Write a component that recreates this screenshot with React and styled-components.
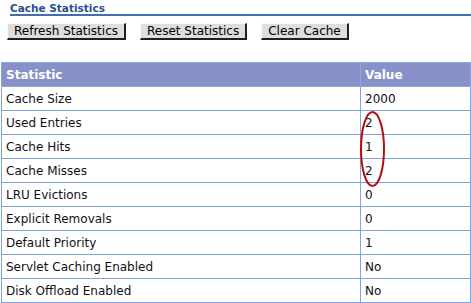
import React from "react";
import styled, { createGlobalStyle } from "styled-components";

const Global = createGlobalStyle`
  html, body { margin: 0; padding: 0; background: #fff; }
  body { font-family: "DejaVu Sans", Verdana, sans-serif; font-size: 12px; color: #000; }
`;

const Page = styled.div`
  width: 471px;
  height: 303px;
  overflow: hidden;
  position: relative;
`;

const TitleBar = styled.div`
  margin-left: 10px;
  padding-top: 2px;
  height: 12px;
  border-bottom: 2px solid #3f6fb0;
`;

const Title = styled.h2`
  margin: 0;
  font-size: 10.5px;
  line-height: 12px;
  font-weight: bold;
  color: #27508f;
`;

const Toolbar = styled.div`
  display: flex;
  gap: 14px;
  padding: 7px 0 0 7px;
  height: 17px;
`;

const Button = styled.button`
  height: 17px;
  padding: 0 6px;
  font-family: "DejaVu Sans", Verdana, sans-serif;
  font-size: 12px;
  line-height: 14px;
  color: #000;
  background: #dedede;
  border-style: solid;
  border-color: #fafafa #202020 #202020 #fafafa;
  border-width: 1px 2px 2px 1px;
  border-radius: 0;
  cursor: pointer;
`;

const TableWrap = styled.div`
  margin-top: 22px;
  margin-left: 1px;
  position: relative;
`;

const Table = styled.table`
  width: 470px;
  border-collapse: collapse;
`;

const Th = styled.th`
  background: #8891c8;
  color: #fff;
  font-weight: bold;
  text-align: left;
  height: 24px;
  padding: 0 4px;
  border: 1px solid #8ba8df;
  font-size: 12px;
  box-sizing: border-box;
  width: ${p => p.$w || "auto"};
`;

const Td = styled.td`
  height: 24px;
  padding: 0 4px;
  border: 1px solid #82a3de;
  font-size: 12px;
  box-sizing: border-box;
  color: #111;
`;

const Ellipse = styled.svg`
  position: absolute;
  left: 358px;
  top: 49px;
  pointer-events: none;
`;

const rows = [
  ["Cache Size", "2000"],
  ["Used Entries", "2"],
  ["Cache Hits", "1"],
  ["Cache Misses", "2"],
  ["LRU Evictions", "0"],
  ["Explicit Removals", "0"],
  ["Default Priority", "1"],
  ["Servlet Caching Enabled", "No"],
  ["Disk Offload Enabled", "No"],
];

export default function App() {
  return (
    <Page>
      <Global />
      <TitleBar>
        <Title>Cache Statistics</Title>
      </TitleBar>
      <Toolbar>
        <Button>Refresh Statistics</Button>
        <Button>Reset Statistics</Button>
        <Button>Clear Cache</Button>
      </Toolbar>
      <TableWrap>
        <Table>
          <thead>
            <tr>
              <Th>Statistic</Th>
              <Th $w="110px">Value</Th>
            </tr>
          </thead>
          <tbody>
            {rows.map(([k, v]) => (
              <tr key={k}>
                <Td>{k}</Td>
                <Td>{v}</Td>
              </tr>
            ))}
          </tbody>
        </Table>
        <Ellipse width="28" height="80" viewBox="0 0 28 80">
          <ellipse cx="13.5" cy="38" rx="11.5" ry="37" fill="none" stroke="#b01010" strokeWidth="2" />
        </Ellipse>
      </TableWrap>
    </Page>
  );
}
